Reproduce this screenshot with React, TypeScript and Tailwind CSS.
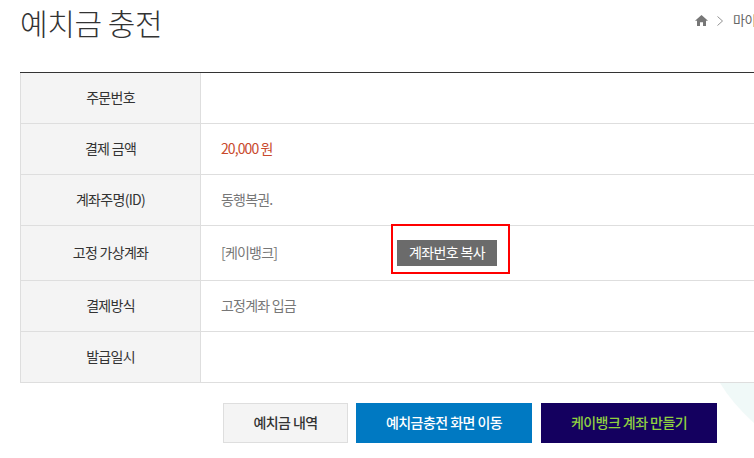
import { ReactNode } from 'react'

const font = "font-['Noto_Sans_CJK_KR','Noto_Sans',sans-serif]"

function Row({ label, height, children }: { label: string; height: string; children?: ReactNode }) {
  return (
    <div className={`flex border-b border-[#dedede] ${height}`}>
      <div className="w-[181px] shrink-0 flex items-center justify-center pb-[2px] bg-[#f4f4f4] border-x border-[#dedede] text-[14px] tracking-[-0.7px] text-[#333]">
        {label}
      </div>
      <div className="flex-1 flex items-center pl-[20px] text-[14px] tracking-[-0.8px] text-[#777]">{children}</div>
    </div>
  )
}

export default function App() {
  return (
    <div className={`${font} relative w-[754px] h-[458px] overflow-hidden bg-white`}>
      {/* pale corner shape */}
      <svg className="absolute left-[720px] top-[383px]" width="34" height="44" viewBox="0 0 34 44">
        <path d="M0 0H34V40Q12 20 0 0Z" fill="#f0f9f8" />
      </svg>

      <div className="relative flex justify-between h-[72px] pl-[20px]">
        <h1 className="text-[30px] leading-[44px] font-light tracking-[-0.4px] text-[#333]">예치금 충전</h1>
        <div className="flex items-start pt-[11px] w-[59px] shrink-0 text-[13px] leading-[18px] text-[#666] whitespace-nowrap">
          <svg className="mt-[4px] shrink-0" width="13" height="11" viewBox="0 0 13 11">
            <path d="M6.5 0L13 5.8H11V11H8V7.2H5V11H2V5.8H0Z" fill="#777" />
          </svg>
          <svg className="ml-[9px] mt-[5px] shrink-0" width="6" height="10" viewBox="0 0 6 10" fill="none">
            <path d="M0.5 0.5L5.5 5L0.5 9.5" stroke="#777" strokeWidth="0.8" />
          </svg>
          <span className="ml-[10px] tracking-[-0.5px]">마이</span>
        </div>
      </div>

      <div className="relative ml-[20px] w-[800px] border-t border-[#333]">
        <Row label="주문번호" height="h-[51px]" />
        <Row label="결제 금액" height="h-[51px]">
          <span className="text-[#c8492c] pb-[2px] tracking-[-0.9px]">20,000 원</span>
        </Row>
        <Row label="계좌주명(ID)" height="h-[51px]">
          <span className="pb-[2px]">동행복권.</span>
        </Row>
        <Row label="고정 가상계좌" height="h-[55px]">
          <span className="w-[176px] shrink-0 pb-[2px]">[케이뱅크]</span>
          <button className="w-[100px] h-[26px] pb-[2px] bg-[#6b6b6b] text-white text-[14px] tracking-[-0.6px]">
            계좌번호 복사
          </button>
        </Row>
        <Row label="결제방식" height="h-[51px]">
          <span className="pb-[2px]">고정계좌 입금</span>
        </Row>
        <Row label="발급일시" height="h-[51px]" />
        <div className="absolute left-[371px] top-[151px] w-[119px] h-[50px] border-2 border-[#f00]" />
      </div>

      <div className="relative flex gap-[8px] ml-[223px] mt-[20px] text-[14px] font-medium tracking-[-0.55px]">
        <button className="w-[125px] h-[40px] pb-[2px] bg-[#f4f4f4] border border-[#dedede] text-[#333]">예치금 내역</button>
        <button className="w-[176px] h-[40px] pb-[2px] bg-[#0079c2] text-white">예치금충전 화면 이동</button>
        <button className="ml-[1px] w-[176px] h-[40px] pb-[2px] bg-[#14005f] text-[#8fd13f]">케이뱅크 계좌 만들기</button>
      </div>
    </div>
  )
}
